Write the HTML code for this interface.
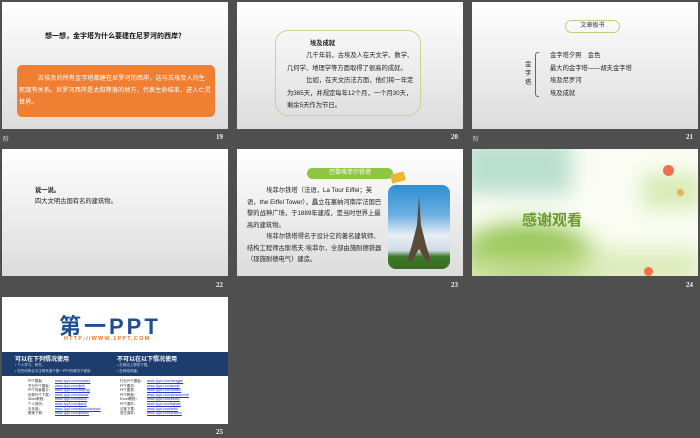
<!DOCTYPE html>
<html><head><meta charset="utf-8"><style>
*{margin:0;padding:0;box-sizing:border-box}
body{width:700px;height:438px;background:#4f4f4f;position:relative;overflow:hidden;font-family:"Liberation Sans","Noto Sans CJK SC",sans-serif}
.s{position:absolute;width:226px;height:127px;background:linear-gradient(#fff,#dcdcdc);overflow:hidden}
.a{position:absolute;white-space:nowrap}
.n{position:absolute;color:#eee;font:bold 7px "Liberation Serif",serif}
.l{position:absolute;color:#ddd;font-size:6px}
.t{font-size:6.3px;color:#222;line-height:12px}
</style></head><body>

<div class="s" style="left:2px;top:2px">
 <div class="a" style="left:43px;top:29px;font-size:7px;font-weight:bold;color:#111">想一想，金字塔为什么要建在尼罗河的西岸？</div>
 <div class="a" style="left:15px;top:63px;width:198px;height:52px;background:#ef7f33;border-radius:5px;color:#fff;font-size:6.2px;line-height:12px;padding:8px 4px 0 2px;white-space:normal">&nbsp;&nbsp;&nbsp;&nbsp;&nbsp;&nbsp;&nbsp;&nbsp;&nbsp;&nbsp;&nbsp;古埃及的所有金字塔都建在尼罗河的西岸，这与古埃及人的生死观有关系。尼罗河西岸是太阳降落的地方，代表生命结束，进入亡灵世界。</div>
</div>
<div class="l" style="left:3px;top:134px">阶</div><div class="n" style="left:216px;top:133px">19</div>

<div class="s" style="left:237px;top:2px">
 <div class="a" style="left:38px;top:28px;width:146px;height:86px;border:1px solid #c5d68c;border-radius:13px"></div>
 <div class="a t" style="left:73px;top:36px;font-weight:bold">埃及成就</div>
 <div class="a t" style="left:50px;top:48px;white-space:normal;width:128px;line-height:12.5px">&nbsp;&nbsp;&nbsp;&nbsp;&nbsp;&nbsp;&nbsp;&nbsp;&nbsp;&nbsp;&nbsp;几千年前，古埃及人在天文学、数学、几何学、地理学等方面取得了很高的成就。<br>&nbsp;&nbsp;&nbsp;&nbsp;&nbsp;&nbsp;&nbsp;&nbsp;&nbsp;&nbsp;&nbsp;比如，在天文历法方面，他们将一年定为365天，并规定每年12个月，一个月30天，剩余5天作为节日。</div>
</div>
<div class="n" style="left:451px;top:133px">20</div>

<div class="s" style="left:472px;top:2px">
 <div class="a" style="left:93px;top:18px;width:55px;height:13px;border:1px solid #b8d27c;border-radius:7px;font-size:6px;text-align:center;line-height:11px;color:#333">文章板书</div>
 <div class="a t" style="left:53px;top:58px;white-space:normal;width:8px;line-height:9px">金字塔</div>
 <div class="a" style="left:63px;top:50px;width:4px;height:45px;border:1px solid #666;border-right:none;border-radius:3px 0 0 3px"></div>
 <div class="a t" style="left:78px;top:48px;line-height:12.5px">金字塔夕照　金色<br>最大的金字塔——胡夫金字塔<br>埃及尼罗河<br>埃及成就</div>
</div>
<div class="l" style="left:473px;top:134px">阶</div><div class="n" style="left:686px;top:133px">21</div>

<div class="s" style="left:2px;top:149px">
 <div class="a t" style="left:33px;top:36px;font-weight:bold">说一说。</div>
 <div class="a t" style="left:33px;top:47px">四大文明古国有名的建筑物。</div>
</div>
<div class="n" style="left:216px;top:281px">22</div>

<div class="s" style="left:237px;top:149px">
 <div class="a" style="left:70px;top:19px;width:86px;height:11px;background:#8dc63f;border-radius:6px;color:#fff;font-size:6px;text-align:center;line-height:11px">巴黎埃菲尔铁塔</div>
 <div class="a" style="left:154px;top:24px;width:14px;height:9px;background:#e8b830;transform:rotate(-15deg)"></div>
 <div class="a t" style="left:10px;top:36px;white-space:normal;width:136px;line-height:11.5px">&nbsp;&nbsp;&nbsp;&nbsp;&nbsp;&nbsp;&nbsp;&nbsp;&nbsp;&nbsp;&nbsp;埃菲尔铁塔（法语，La Tour Eiffel；英语，the Eiffel Tower），矗立在塞纳河南岸法国巴黎的战神广场，于1889年建成，是当时世界上最高的建筑物。<br>&nbsp;&nbsp;&nbsp;&nbsp;&nbsp;&nbsp;&nbsp;&nbsp;&nbsp;&nbsp;&nbsp;埃菲尔铁塔得名于设计它的著名建筑师、结构工程师古斯塔夫·埃菲尔，全部由施耐德铁器（现施耐德电气）建造。</div>
 <div class="a" style="left:151px;top:36px;width:62px;height:84px;border-radius:8px;overflow:hidden;background:linear-gradient(#2f8fd0 0%,#6aaee0 35%,#e8eef4 60%,#d0dce6 78%,#3d7a2a 85%,#3a6a22 100%)">
  <svg width="62" height="84" style="position:absolute;left:0;top:0"><path d="M31 10 L29 40 L24 60 L19 76 L24 76 L31 64 L38 76 L43 76 L38 60 L33 40 Z" fill="#5a4a3a"/></svg>
 </div>
</div>
<div class="n" style="left:451px;top:281px">23</div>

<div class="s" style="left:472px;top:149px;background:#fbfdf4">
 <div class="a" style="left:-10px;top:-10px;width:110px;height:55px;background:#b4dccc;filter:blur(10px);opacity:.9"></div>
 <div class="a" style="left:-10px;top:75px;width:130px;height:60px;background:#8cc048;filter:blur(12px);border-radius:50%"></div>
 <div class="a" style="left:-10px;top:100px;width:240px;height:40px;background:#cfe3a0;filter:blur(12px);opacity:.7"></div>
 <div class="a" style="left:170px;top:25px;width:60px;height:35px;background:#d6ebb4;filter:blur(10px)"></div>
 <div class="a" style="left:191px;top:16px;width:11px;height:11px;border-radius:50%;background:#ee7050"></div>
 <div class="a" style="left:205px;top:40px;width:7px;height:7px;border-radius:50%;background:#f0b050"></div>
 <div class="a" style="left:172px;top:118px;width:9px;height:9px;border-radius:50%;background:#f07050"></div>
 <div class="a" style="left:50px;top:60px;font-size:15px;font-weight:bold;color:#6a9a2c">感谢观看</div>
</div>
<div class="n" style="left:686px;top:281px">24</div>

<div class="s" style="left:2px;top:297px;background:#fff">
 <div class="a" style="left:57px;top:12px;font-size:22px;font-weight:bold;color:#1d4f91;letter-spacing:3px">第一PPT</div>
 <div class="a" style="left:62px;top:39px;font-size:5.5px;color:#e8772a;letter-spacing:1.2px;font-weight:bold">HTTP://WWW.1PPT.COM</div>
 <div class="a" style="left:0;top:55px;width:226px;height:24px;background:#1c3d6e"></div>
 <div class="a" style="left:13px;top:57px;font-size:6px;font-weight:bold;color:#fff">可以在下列情况使用</div>
 <div class="a" style="left:115px;top:57px;font-size:6px;font-weight:bold;color:#fff">不可以在以下情况使用</div>
 <div class="a" style="left:13px;top:65px;font-size:3.5px;color:#cde;line-height:6px">• 个人学习、研究。<br>• 在任何场合中注明来源于第一PPT的情况下使用</div>
 <div class="a" style="left:115px;top:65px;font-size:3.5px;color:#cde;line-height:6px">• 在网站上提供下载。<br>• 在网络传播。</div>
 <div class="a" style="left:26px;top:82px;font-size:3.5px;color:#333;line-height:4.6px">PPT模板：<br>节日PPT模板：<br>PPT背景图片：<br>优秀PPT下载：<br>Word教程：<br>个人简历：<br>手抄报：<br>教案下载：</div>
 <div class="a" style="left:53px;top:82px;font-size:3.5px;color:#2233cc;text-decoration:underline;line-height:4.6px">www.1ppt.com/moban/<br>www.1ppt.com/jieri/<br>www.1ppt.com/beijing/<br>www.1ppt.com/xiazai/<br>www.1ppt.com/word/<br>www.1ppt.com/jianli/<br>www.1ppt.com/shouchaobao/<br>www.1ppt.com/jiaoan/</div>
 <div class="a" style="left:118px;top:82px;font-size:3.5px;color:#333;line-height:4.6px">行业PPT模板：<br>PPT素材：<br>PPT图表：<br>PPT教程：<br>Excel教程：<br>PPT课件：<br>试卷下载：<br>语文课件：</div>
 <div class="a" style="left:145px;top:82px;font-size:3.5px;color:#2233cc;text-decoration:underline;line-height:4.6px">www.1ppt.com/hangye/<br>www.1ppt.com/sucai/<br>www.1ppt.com/tubiao/<br>www.1ppt.com/powerpoint/<br>www.1ppt.com/excel/<br>www.1ppt.com/kejian/<br>www.1ppt.com/shiti/<br>www.1ppt.com/yuwen/</div>
</div>
<div class="n" style="left:216px;top:428px">25</div>
</body></html>
